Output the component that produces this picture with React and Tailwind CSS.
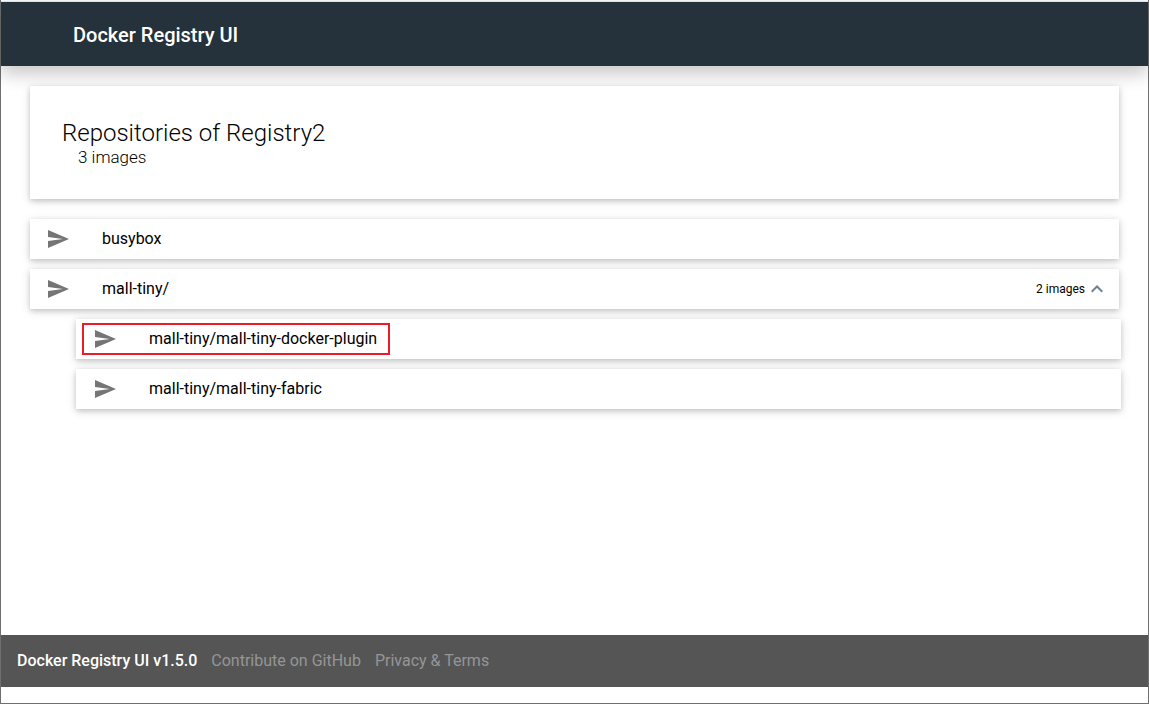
import { MdSend } from "react-icons/md";

const cardShadow =
  "shadow-[0_2px_5px_0_rgba(0,0,0,0.16),0_2px_10px_0_rgba(0,0,0,0.12)]";

function RepositoryLabel({ name }) {
  return (
    <>
      <MdSend className="size-6 shrink-0 text-[#757575]" aria-hidden="true" />
      <span>{name}</span>
    </>
  );
}

function Repository({ name }) {
  return (
    <li className={`flex h-10 items-center bg-white ${cardShadow}`}>
      <a href="#" className="flex h-full grow items-center gap-8 pl-4">
        <RepositoryLabel name={name} />
      </a>
    </li>
  );
}

function NestedRepository({ name, highlighted }) {
  return (
    <li className={`flex h-10 items-center bg-white pl-[6px] ${cardShadow}`}>
      <a
        href="#"
        className={`flex h-8 items-center gap-8 border-2 pr-[11px] pl-[9px] ${
          highlighted ? "border-[#ed1c24]" : "border-transparent"
        }`}
      >
        <RepositoryLabel name={name} />
      </a>
    </li>
  );
}

export default function App() {
  return (
    <div className="flex min-h-screen flex-col border-x border-b border-[#707070] bg-white font-['Roboto',sans-serif] text-base text-black">
      <header className="mt-px flex h-[65px] items-center border-t border-[#dfe3e8] bg-[#25313b] px-[72px] pt-[2px] shadow-[0_8px_17px_0_rgba(0,0,0,0.12),0_6px_20px_0_rgba(0,0,0,0.12)]">
        <span className="text-xl font-medium text-white">
          Docker Registry UI
        </span>
      </header>

      <main className="grow px-[29px] pt-5 pb-8">
        <section className={`bg-white p-8 font-light ${cardShadow}`}>
          <h1 className="text-2xl leading-[30px]">Repositories of Registry2</h1>
          <p className="pl-4 text-[17px] leading-[19px]">3 images</p>
        </section>

        <ul className="mt-5 flex flex-col gap-[10px]">
          <Repository name="busybox" />
          <li>
            <button
              type="button"
              aria-expanded="true"
              className={`flex h-10 w-full items-center gap-8 bg-white px-4 text-left ${cardShadow}`}
            >
              <RepositoryLabel name="mall-tiny/" />
              <span className="ml-auto flex items-center gap-[6px] text-xs">
                2 images
                <svg
                  viewBox="0 0 12 8"
                  className="h-2 w-3"
                  fill="none"
                  stroke="#6b8294"
                  strokeWidth="2"
                  aria-hidden="true"
                >
                  <path d="M0.7 6.8 6 1.5 11.3 6.8" />
                </svg>
              </span>
            </button>
            <ul className="mt-[10px] -mr-[2px] ml-[46px] flex flex-col gap-[10px]">
              <NestedRepository name="mall-tiny/mall-tiny-docker-plugin" highlighted />
              <NestedRepository name="mall-tiny/mall-tiny-fabric" />
            </ul>
          </li>
        </ul>
      </main>

      <footer className="mb-4 flex h-[52px] items-center gap-[14px] bg-[#555555] px-4">
        <span className="font-medium text-white">Docker Registry UI v1.5.0</span>
        <a href="#" className="text-[#959595]">
          Contribute on GitHub
        </a>
        <a href="#" className="text-[#959595]">
          Privacy &amp; Terms
        </a>
      </footer>
    </div>
  );
}
